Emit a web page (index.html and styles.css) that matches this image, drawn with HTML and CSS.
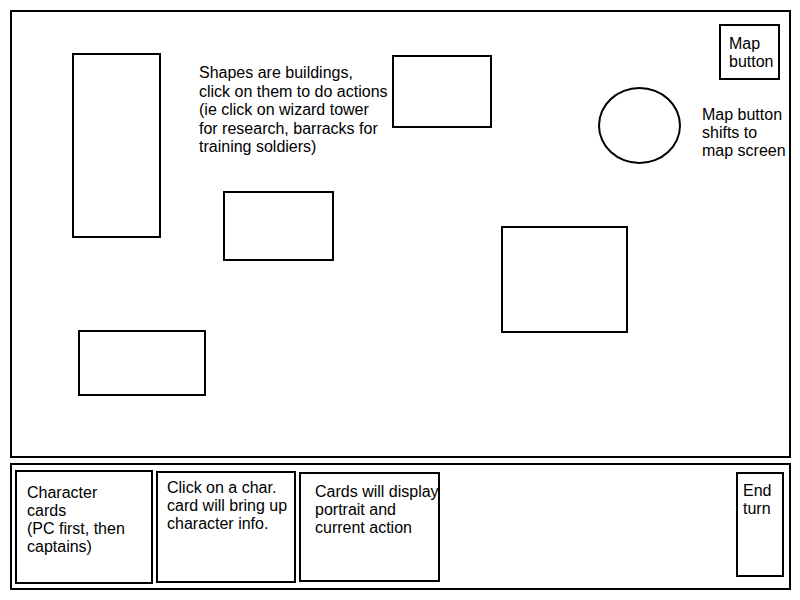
FILE: index.html
```html
<!DOCTYPE html>
<html>
<head>
  <meta charset="UTF-8">
  <title>Town screen mockup</title>
  <link rel="stylesheet" href="styles.css">
</head>
<body>
  <div class="town">
    <!-- buildings, placed freely on the town canvas -->
    <div class="building tower"></div>
    <div class="building hall"></div>
    <div class="building barracks"></div>
    <div class="building stable"></div>
    <div class="building market"></div>
    <div class="map-globe"></div>
    <div class="map-button">Map<br>button</div>
    <p class="note note-shapes">Shapes are buildings,<br>click on them to do actions<br>(ie click on wizard tower<br>for research, barracks for<br>training soldiers)</p>
    <p class="note note-map">Map button<br>shifts to<br>map screen</p>
  </div>
  <div class="bar">
    <div class="card card-1">Character<br>cards<br>(PC first, then<br>captains)</div>
    <div class="card card-2">Click on a char.<br>card will bring up<br>character info.</div>
    <div class="card card-3">Cards will display<br>portrait and<br>current action</div>
    <div class="end-turn">End<br>turn</div>
  </div>
</body>
</html>
```

FILE: styles.css
```css
body {
  margin: 0;
  padding: 10px;
  background: #fff;
  color: #000;
  font-family: "Liberation Sans", Arial, sans-serif;
  font-size: 16px;
  line-height: normal;
}
.town {
  position: relative;
  box-sizing: border-box;
  width: 781px;
  height: 448px;
  border: 2px solid #000;
  margin-bottom: 5px;
}
.building {
  position: absolute;
  box-sizing: border-box;
  border: 2px solid #000;
}
.tower {
  left: 60px;
  top: 41px;
  width: 89px;
  height: 185px;
}
.hall {
  left: 380px;
  top: 43px;
  width: 100px;
  height: 73px;
}
.barracks {
  left: 211px;
  top: 179px;
  width: 111px;
  height: 70px;
}
.stable {
  left: 66px;
  top: 318px;
  width: 128px;
  height: 66px;
}
.market {
  left: 489px;
  top: 214px;
  width: 127px;
  height: 107px;
}
.map-globe {
  position: absolute;
  box-sizing: border-box;
  left: 586px;
  top: 75px;
  width: 83px;
  height: 77px;
  border: 2px solid #000;
  border-radius: 50%;
}
.map-button {
  position: absolute;
  box-sizing: border-box;
  left: 707px;
  top: 12px;
  width: 61px;
  height: 56px;
  padding: 9px 0 0 8px;
  border: 2px solid #000;
}
.note {
  position: absolute;
  margin: 0;
  white-space: nowrap;
}
.note-shapes {
  left: 187px;
  top: 52px;
  line-height: 18.6px;
}
.note-map {
  left: 690px;
  top: 94px;
}
.bar {
  display: flex;
  align-items: flex-start;
  gap: 3px;
  box-sizing: border-box;
  width: 781px;
  height: 127px;
  padding: 5px 5px 0 3px;
  border: 2px solid #000;
}
.card,
.end-turn {
  box-sizing: border-box;
  border: 2px solid #000;
  white-space: nowrap;
}
.card-1 {
  width: 138px;
  height: 114px;
  padding: 12px 0 0 10px;
}
.card-2 {
  width: 140px;
  height: 112px;
  margin-top: 1px;
  padding: 6px 0 0 9px;
}
.card-3 {
  width: 141px;
  height: 110px;
  margin-top: 2px;
  padding: 9px 0 0 14px;
}
.end-turn {
  width: 48px;
  height: 105px;
  margin-top: 2px;
  margin-left: auto;
  padding: 8px 0 0 5px;
}
```
